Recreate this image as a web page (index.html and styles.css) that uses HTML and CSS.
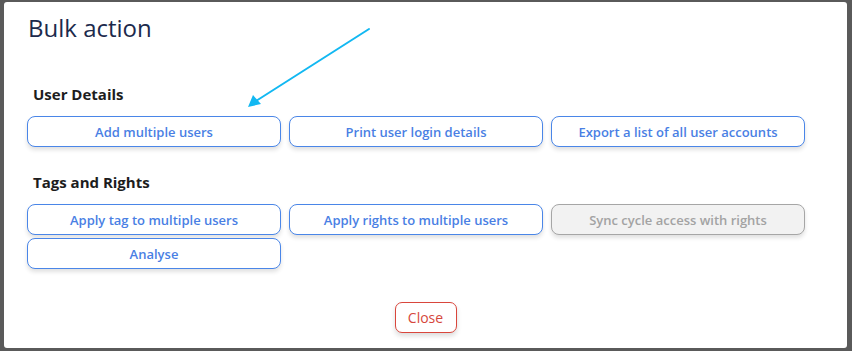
FILE: index.html
```html
<!DOCTYPE html>
<html>
<head>
<meta charset="utf-8">
<link rel="stylesheet" href="styles.css">
</head>
<body>
<div class="modal">
  <h1 class="title">Bulk action</h1>
  <section class="group">
    <h2 class="group-title">User Details</h2>
    <div class="grid">
      <button class="btn">Add multiple users</button>
      <button class="btn">Print user login details</button>
      <button class="btn">Export a list of all user accounts</button>
    </div>
  </section>
  <section class="group group-second">
    <h2 class="group-title">Tags and Rights</h2>
    <div class="grid">
      <button class="btn">Apply tag to multiple users</button>
      <button class="btn">Apply rights to multiple users</button>
      <button class="btn btn-disabled">Sync cycle access with rights</button>
      <button class="btn">Analyse</button>
    </div>
  </section>
  <div class="footer">
    <button class="btn-close">Close</button>
  </div>
  <svg class="arrow" width="852" height="351" viewBox="0 0 852 351">
    <line x1="369" y1="29" x2="256" y2="101" stroke="#12b8f2" stroke-width="2" stroke-linecap="round"/>
    <polygon points="248,107 253,95 261,104" fill="#12b8f2"/>
  </svg>
</div>
</body>
</html>
```
FILE: styles.css
```css
html, body {
  margin: 0;
  padding: 0;
}
body {
  background: #5a5a5a;
  width: 852px;
  height: 351px;
  overflow: hidden;
  font-family: "Open Sans", "Noto Sans", sans-serif;
}
.modal {
  position: relative;
  margin: 2px 0 0 4px;
  width: 843px;
  height: 346px;
  box-sizing: border-box;
  background: #fff;
  border-radius: 3px;
  padding: 11px 23px 0 23px;
}
.title {
  margin: 0 0 0 1px;
  font-size: 24px;
  font-weight: 400;
  line-height: 30px;
  color: #1c2a4c;
}
.group {
  margin-top: 41px;
}
.group-second {
  margin-top: 25px;
}
.group-title {
  margin: 0 0 12px 6px;
  font-size: 15px;
  font-weight: 700;
  line-height: 20px;
  color: #1d1d1d;
}
.grid {
  display: grid;
  grid-template-columns: repeat(3, 254px);
  column-gap: 8px;
  row-gap: 3px;
}
.btn {
  height: 31px;
  box-sizing: border-box;
  border: 1px solid #4a86e8;
  border-radius: 8px;
  background: #fff;
  color: #4a7fe4;
  font-family: "Open Sans", "Noto Sans", sans-serif;
  font-size: 13px;
  font-weight: 600;
  box-shadow: 0 3px 4px rgba(0, 0, 0, 0.12);
  padding: 0;
}
.btn-disabled {
  background: #f2f2f2;
  border-color: #a6a6a6;
  color: #a3a3a3;
}
.footer {
  display: flex;
  justify-content: center;
  margin-top: 33px;
}
.btn-close {
  width: 62px;
  height: 31px;
  box-sizing: border-box;
  border: 1px solid #d9463c;
  border-radius: 7px;
  background: #fff;
  color: #d6473c;
  font-family: "Open Sans", "Noto Sans", sans-serif;
  font-size: 14px;
  font-weight: 400;
  box-shadow: 0 3px 5px rgba(0, 0, 0, 0.14);
  padding: 0;
}
.arrow {
  position: absolute;
  left: -4px;
  top: -2px;
  pointer-events: none;
}
```
